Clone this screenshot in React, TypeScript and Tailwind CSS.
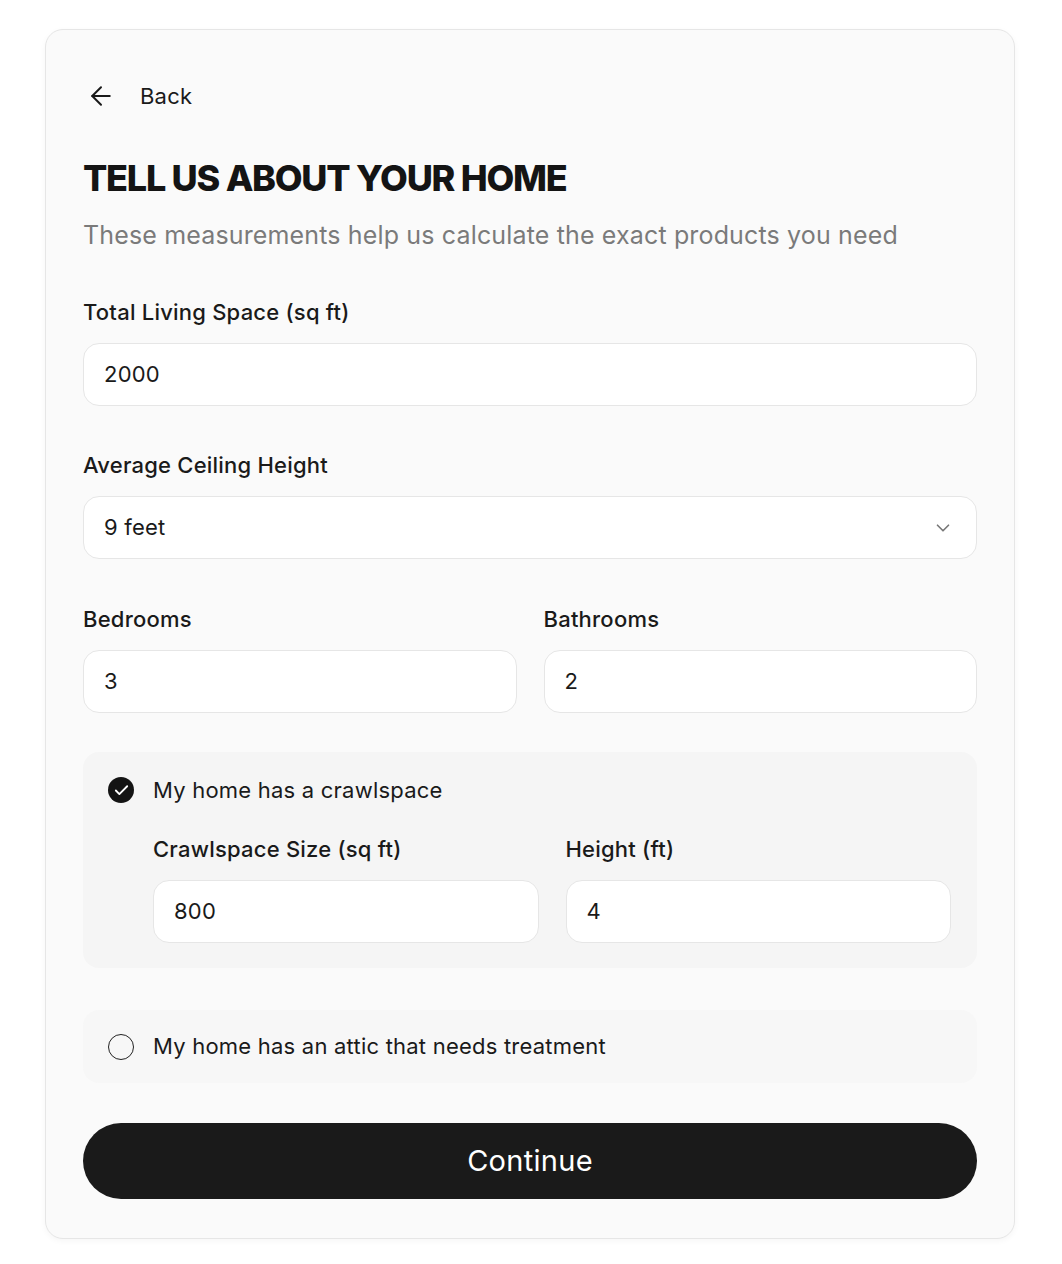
import { ArrowLeft, ChevronDown, Check } from "lucide-react";

function Field({ label, value, className = "" }: { label: string; value: string; className?: string }) {
    return (
        <div className={`flex flex-col gap-[17px] ${className}`}>
            <label className="text-[22px] leading-[28px] font-medium tracking-[0.01em] text-[#1a1a1a]">{label}</label>
            <div className="h-[63px] flex items-center px-5 bg-white border border-[#e6e6e6] rounded-2xl text-[22px] tracking-[0.01em] text-[#1a1a1a]">
                {value}
            </div>
        </div>
    );
}

export default function App() {
    return (
        <div className="min-h-[1264px] bg-white pt-[29px] pb-[25px] font-['Inter',sans-serif]">
            <section className="w-[970px] ml-[45px] bg-[#fafafa] border border-[#e6e6e6] rounded-[18px] shadow-[0_2px_6px_rgba(0,0,0,0.04)] px-[37px] pt-[52px] pb-[39px]">
                <button className="flex items-center gap-[24px] h-[28px] text-[22px] tracking-[0.01em] text-[#1a1a1a] ml-[3px]">
                    <ArrowLeft size={30} strokeWidth={1.6} />
                    Back
                </button>

                <h1 className="mt-[46px] text-[36px] leading-[44px] font-extrabold tracking-[-0.035em] text-[#141414]">
                    TELL US ABOUT YOUR HOME
                </h1>
                <p className="mt-[19px] text-[25px] leading-[32px] text-[#7a7a7a] tracking-[0.006em]">
                    These measurements help us calculate the exact products you need
                </p>

                <Field className="mt-[47px]" label="Total Living Space (sq ft)" value="2000" />

                <div className="mt-[45px] flex flex-col gap-[17px]">
                    <label className="text-[22px] leading-[28px] font-medium tracking-[0.01em] text-[#1a1a1a]">Average Ceiling Height</label>
                    <div className="h-[63px] flex items-center justify-between pl-5 pr-[22px] bg-white border border-[#e6e6e6] rounded-2xl text-[22px] tracking-[0.01em] text-[#1a1a1a]">
                        9 feet
                        <ChevronDown size={22} strokeWidth={1.8} className="text-[#777]" />
                    </div>
                </div>

                <div className="mt-[46px] grid grid-cols-2 gap-[27px]">
                    <Field label="Bedrooms" value="3" />
                    <Field label="Bathrooms" value="2" />
                </div>

                <div className="mt-[39px] bg-[#f5f5f5] rounded-2xl pt-6 pb-[25px] pl-[25px] pr-[26px]">
                    <div className="flex items-center gap-[19px] h-[28px]">
                        <span className="w-[26px] h-[26px] rounded-full bg-[#141414] flex items-center justify-center text-white">
                            <Check size={17} strokeWidth={2.6} />
                        </span>
                        <span className="text-[22px] tracking-[0.01em] text-[#1a1a1a]">My home has a crawlspace</span>
                    </div>
                    <div className="mt-[31px] ml-[45px] grid grid-cols-2 gap-[27px]">
                        <Field label="Crawlspace Size (sq ft)" value="800" />
                        <Field label="Height (ft)" value="4" />
                    </div>
                </div>

                <div className="mt-[42px] bg-[#f7f7f7] rounded-2xl h-[73px] flex items-center gap-[19px] pl-[25px]">
                    <span className="w-[26px] h-[26px] rounded-full border-[1.5px] border-[#222]" />
                    <span className="text-[22px] tracking-[0.01em] text-[#1a1a1a]">My home has an attic that needs treatment</span>
                </div>

                <button className="mt-[40px] w-full h-[76px] rounded-full bg-[#1a1a1a] text-white text-[29px] tracking-[0.01em]">
                    Continue
                </button>
            </section>
        </div>
    );
}
